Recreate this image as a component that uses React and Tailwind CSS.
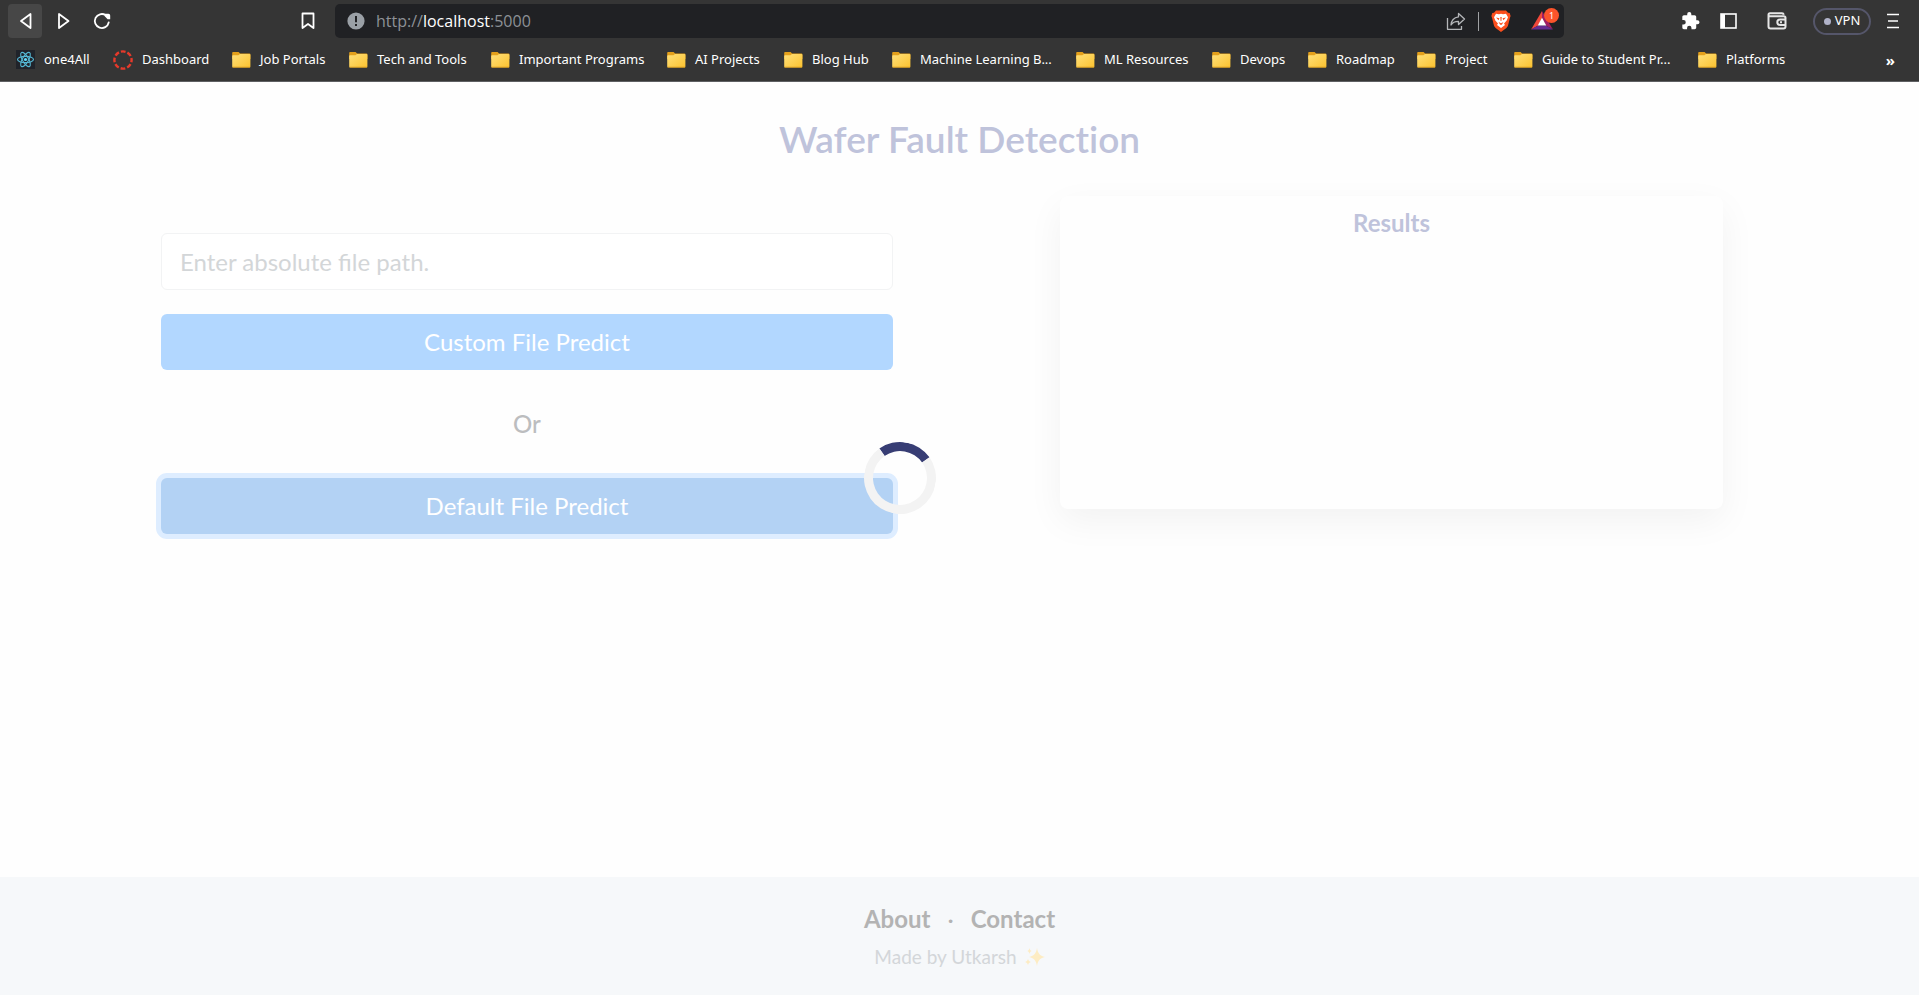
import React from "react";

const bookmarks = [
  { label: "Job Portals", width: "w-[117px]" },
  { label: "Tech and Tools", width: "w-[142px]" },
  { label: "Important Programs", width: "w-[176px]" },
  { label: "AI Projects", width: "w-[117px]" },
  { label: "Blog Hub", width: "w-[108px]" },
  { label: "Machine Learning B...", width: "w-[184px]" },
  { label: "ML Resources", width: "w-[136px]" },
  { label: "Devops", width: "w-[96px]" },
  { label: "Roadmap", width: "w-[109px]" },
  { label: "Project", width: "w-[97px]" },
  { label: "Guide to Student Pr...", width: "w-[184px]" },
  { label: "Platforms", width: "w-[110px]" },
];

function FolderIcon() {
  return (
    <svg className="h-4 w-[19px] shrink-0" viewBox="0 0 19 16" aria-hidden="true">
      <defs>
        <linearGradient id="folder" x1="0" y1="0" x2="1" y2="1">
          <stop offset="0" stopColor="#ffe07a" />
          <stop offset="1" stopColor="#fbc22f" />
        </linearGradient>
      </defs>
      <path d="M1 0h5.6l1.5 1.5H17.4a1 1 0 0 1 1 1V7H.2V.9A.9.9 0 0 1 1 0Z" fill="#e4a01b" />
      <path d="M1 3.2h5.4L8 2h9.4a1 1 0 0 1 1 1v11.6a1 1 0 0 1-1 1H1.2a1 1 0 0 1-1-1V4a.8.8 0 0 1 .8-.8Z" fill="url(#folder)" />
      <path d="M.5 15.2h17.6" stroke="#d99c1e" strokeWidth=".8" />
    </svg>
  );
}

function ReactIcon() {
  return (
    <svg className="h-[19px] w-[19px] shrink-0" viewBox="0 0 19 19" aria-hidden="true">
      <rect width="19" height="19" fill="#20232a" />
      <g fill="none" stroke="#55b7d3" strokeWidth="1.1">
        <ellipse cx="9.5" cy="9.5" rx="8" ry="3.1" />
        <ellipse cx="9.5" cy="9.5" rx="8" ry="3.1" transform="rotate(60 9.5 9.5)" />
        <ellipse cx="9.5" cy="9.5" rx="8" ry="3.1" transform="rotate(120 9.5 9.5)" />
      </g>
      <circle cx="9.5" cy="9.5" r="1.6" fill="#61dafb" />
    </svg>
  );
}

function DashboardIcon() {
  return (
    <svg className="h-5 w-5 shrink-0" viewBox="0 0 20 20" aria-hidden="true">
      <circle cx="10" cy="10" r="8.6" fill="none" stroke="#e63a2b" strokeWidth="2.4" strokeDasharray="4.75 2" strokeDashoffset="2.4" />
    </svg>
  );
}

function Toolbar() {
  return (
    <div className="flex h-[42px] items-center">
      <button type="button" aria-label="Back" className="ml-2 flex h-[34px] w-[34px] items-center justify-center rounded bg-[#474747]">
        <svg width="14" height="18" viewBox="0 0 14 18" fill="none" stroke="#fff" strokeWidth="1.8" strokeLinejoin="round">
          <path d="M12.500 2v14L3 9Z" />
        </svg>
      </button>
      <button type="button" aria-label="Forward" className="ml-[14px] flex h-[34px] w-4 items-center justify-center">
        <svg width="16" height="18" viewBox="0 0 16 18" fill="none" stroke="#fff" strokeWidth="1.8" strokeLinejoin="round">
          <path d="M3 2v14l9.500-7Z" />
        </svg>
      </button>
      <button type="button" aria-label="Reload" className="ml-[21px] flex h-[34px] w-[18px] items-center justify-center">
        <svg width="18" height="18" viewBox="0 0 18 18" fill="none">
          <path d="M12.700 3.200A7 7 0 1 0 15.700 10.500" stroke="#fff" strokeWidth="1.800" strokeLinecap="round" />
          <path d="M12 1.800h3.500a1.700 1.700 0 0 1 1.700 1.700v3.700h-2.600L11.500 4Z" fill="#fff" />
        </svg>
      </button>
      <button type="button" aria-label="Bookmark this tab" className="ml-[189px] flex h-[34px] w-4 items-center justify-center">
        <svg width="14" height="18" viewBox="0 0 14 18" fill="none" stroke="#fff" strokeWidth="1.800" strokeLinejoin="round">
          <path d="M1.500 1.500h11v14.500L7 12l-5.500 4Z" />
        </svg>
      </button>
      <div className="ml-[19px] flex h-[34px] min-w-0 flex-1 items-center rounded-[5px] bg-[#202124] pr-[5px] pl-3">
        <svg className="shrink-0" width="18" height="18" viewBox="0 0 18 18" aria-hidden="true">
          <circle cx="9" cy="9" r="8.600" fill="#9aa0a6" />
          <path d="M9 4v6.200M9 12v2" stroke="#202124" strokeWidth="2" />
        </svg>
        <div className="ml-[11px] flex-1 font-['Open_Sans',sans-serif] text-[16px] leading-5 text-[#8d9196]">
          http://<span className="text-white">localhost</span>:5000
        </div>
        <button type="button" aria-label="Share" className="h-5 w-5">
          <svg width="20" height="20" viewBox="0 0 20 20" fill="none" stroke="#b4b6b9" strokeWidth="1.300" strokeLinejoin="round">
            <path d="M1.500 7v11.300h14V15" />
            <path d="M12.500 2.500 18.500 8l-6 5.500v-3.200c-3.500 0-6 1-7.500 3.700.3-4.600 3.400-7.600 7.500-8.200Z" />
          </svg>
        </button>
        <span className="ml-3 h-[19px] w-px bg-[#a0a2a4]" />
        <button type="button" aria-label="Brave Shields" className="ml-3 h-[22px] w-5">
          <svg width="20" height="22" viewBox="0 0 20 22">
            <path d="M5 .5h10l2 2.200 1.700.2.900 3-.7 2-2 8.200-1.500 2L10 22l-5.400-3.900-1.500-2-2-8.200-.7-2 .9-3 1.700-.2Z" fill="#fb4f1d" />
            <path d="m5 3.700 3 .5 2-.5 2 .5 3-.5 2 3.600-1.300 3.200-2.700 3 1 1.500L10 18l-4-3 1-1.500-2.700-3L3 7.300Z" fill="#fff" />
            <path d="m5 7.500 3.400.8-.8 2Zm10 0-3.400.8.800 2ZM9.300 7h1.400l-.3 4h-.8Zm-1.800 5 2.500 1.300 2.500-1.300-1.700 2.700H9.200Z" fill="#fb4f1d" />
          </svg>
        </button>
        <button type="button" aria-label="Brave Rewards" className="relative ml-5 h-[22px] w-7">
          <svg className="absolute bottom-[2px] left-0" width="22" height="19" viewBox="0 0 23 20">
            <path d="M11.500 0 0 19.500l7.500-4.300 4-7.200Z" fill="#f1483a" />
            <path d="m11.500 0 11.500 19.500-7.500-4.300-4-7.200Z" fill="#9e1f63" />
            <path d="m0 19.500 7.500-4.300h8l7.500 4.300Z" fill="#662d91" />
            <path d="m11.500 7 4.500 8.200H7Z" fill="#fff" />
          </svg>
          <span className="absolute -top-[2px] right-0 flex h-[15px] w-[15px] items-center justify-center rounded-full bg-[#fb542b] text-[9px] leading-none text-white">1</span>
        </button>
      </div>
      <button type="button" aria-label="Extensions" className="ml-[117px] h-[18px] w-5">
        <svg width="19" height="18" viewBox="1 1 22 22" fill="#fff">
          <path d="M20.500 11H19V7c0-1.100-.9-2-2-2h-4V3.500a2.500 2.500 0 0 0-5 0V5H4c-1.100 0-2 .9-2 2v3.800h1.500a2.700 2.700 0 0 1 0 5.400H2V20c0 1.100.9 2 2 2h3.800v-1.500a2.700 2.700 0 0 1 5.400 0V22H17c1.100 0 2-.9 2-2v-4h1.500a2.500 2.500 0 0 0 0-5Z" />
        </svg>
      </button>
      <button type="button" aria-label="Side panel" className="ml-[19px] h-4 w-[18px]">
        <svg width="18" height="16" viewBox="0 0 18 16">
          <rect x="1" y="1" width="15" height="14" fill="none" stroke="#fff" strokeWidth="1.600" />
          <path d="M1 1h4v14H1Z" fill="#fff" />
        </svg>
      </button>
      <button type="button" aria-label="Wallet" className="ml-[29px] h-[18px] w-5">
        <svg width="20" height="18" viewBox="0 0 20 18" fill="none" stroke="#e6e6e6" strokeWidth="2" strokeLinejoin="round">
          <path d="M18.500 7V6c0-1-.7-1.700-1.700-1.700H3A1.500 1.500 0 0 1 3 1.300h12c1 0 1.600.6 1.800 1.500M1.500 2.500v11.900c0 1.200.8 2 2 2h13c1.200 0 2-.8 2-2V7.500h-5.500a2.700 2.700 0 0 0 0 5.400h5.500M13 10.200h2" />
        </svg>
      </button>
      <button type="button" className="ml-[26px] flex h-[27px] w-[58px] items-center justify-center gap-1 rounded-full border-2 border-[#55566a] text-[13px] text-white">
        <span className="h-[7px] w-[7px] rounded-full bg-[#b0b2c8]" />
        VPN
      </button>
      <button type="button" aria-label="Menu" className="mr-5 ml-4 h-4 w-3">
        <svg width="12" height="16" viewBox="0 0 12 16" stroke="#fff" strokeWidth="1.600">
          <path d="M0 1.500h12M1 8h10M0 14.500h12" />
        </svg>
      </button>
    </div>
  );
}

function BookmarkBar() {
  return (
    <nav aria-label="Bookmarks" className="flex h-[35px] items-center pl-4 text-[13px] whitespace-nowrap text-white">
      <a href="#one4all" className="flex w-[97px] shrink-0 items-center gap-[9px]">
        <ReactIcon />
        one4All
      </a>
      <a href="#dashboard" className="flex w-[119px] shrink-0 items-center gap-[9px]">
        <DashboardIcon />
        Dashboard
      </a>
      {bookmarks.map((b) => (
        <a key={b.label} href="#folder" className={`flex shrink-0 items-center gap-[9px] ${b.width}`}>
          <FolderIcon />
          {b.label}
        </a>
      ))}
      <button type="button" aria-label="More bookmarks" className="mr-6 ml-auto text-[15px] leading-5 font-bold">
        »
      </button>
    </nav>
  );
}

export default function App() {
  return (
    <div className="flex min-h-screen flex-col bg-[#fefefe] font-['Lato',sans-serif]">
      <header className="h-[82px] border-b border-[#5f6063] bg-[#353535] font-['Noto_Sans','Open_Sans',sans-serif]">
        <Toolbar />
        <BookmarkBar />
      </header>

      <main className="relative flex-1">
        <h1 className="pt-[35px] text-center text-[37px] leading-[44px] font-semibold text-[#bfc3db] [font-variant-ligatures:none]">
          Wafer Fault Detection
        </h1>
        <div className="mt-[35px] grid grid-cols-[732fr_663fr] gap-[167px] pr-[196px] pl-[161px]">
          <form className="flex flex-col pt-[37px] text-[24px]" onSubmit={(e) => e.preventDefault()}>
            <input
              type="text"
              aria-label="File path"
              placeholder="Enter absolute file path."
              className="h-[57px] rounded-md border border-[#f2f3f4] bg-white px-[18px] text-[#b3b3b3] placeholder:text-[#d3d6d8]"
            />
            <button type="button" className="mt-6 h-14 rounded-md bg-[#b2d7ff] text-white">
              Custom File Predict
            </button>
            <p className="my-9 text-center leading-9 font-medium text-[#bcbdbf]">Or</p>
            <button type="button" className="h-14 rounded-md bg-[#b3d2f4] text-white ring-[5px] ring-[#deedff]">
              Default File Predict
            </button>
          </form>
          <section className="h-[313px] rounded-lg bg-[#fefefe] pt-3 shadow-[0_12px_36px_rgba(0,0,0,0.05)]">
            <h2 className="text-center text-[24px] leading-[30px] font-bold text-[#bfc3db]">Results</h2>
          </section>
        </div>
        <div
          role="status"
          aria-label="Loading"
          className="absolute top-[360px] left-[45%] h-[72px] w-[72px] rotate-10 rounded-full border-[9px] border-[#f3f3f3] border-t-[#373d74]"
        />
      </main>

      <footer className="flex h-[118px] flex-col items-center bg-[#f6f8fa] pt-[26px]">
        <div className="flex items-center gap-[17px] text-[24px] leading-8 font-bold text-[#b3b3b3]">
          <a href="#about">About</a>
          <span className="font-normal">·</span>
          <a href="#contact">Contact</a>
        </div>
        <p className="mt-2 flex items-center gap-2 text-[19px] leading-7 text-[#d3d6d9]">
          Made by Utkarsh
          <svg width="20" height="20" viewBox="0 0 20 20" fill="#fdecc3" aria-hidden="true">
            <path d="M12 1c1 5.500 2.500 7.500 8 9-5.500 1.500-7 3.500-8 9-1-5.500-2.500-7.500-8-9 5.500-1.500 7-3.500 8-9Z" />
            <path d="M4.500 1c.4 2 .9 2.600 2.500 3-1.600.4-2.100 1-2.500 3-.4-2-.9-2.600-2.500-3 1.600-.4 2.100-1 2.500-3ZM3 11.500c.4 2.200 1 2.900 3 3.500-2 .6-2.600 1.300-3 3.500-.4-2.200-1-2.900-3-3.500 2-.6 2.600-1.300 3-3.500Z" />
          </svg>
        </p>
      </footer>
    </div>
  );
}
